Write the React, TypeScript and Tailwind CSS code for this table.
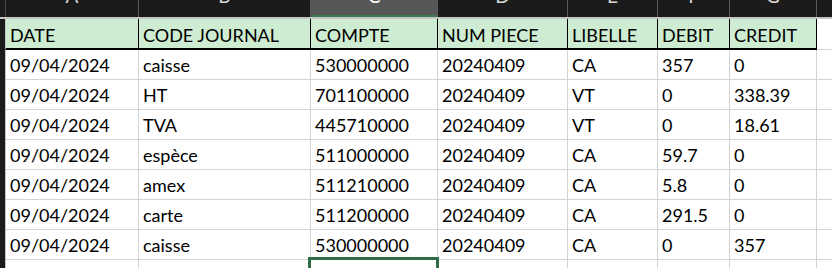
import React from 'react';

const widths = ['w-[133px]', 'w-[172px]', 'w-[127px]', 'w-[130px]', 'w-[90px]', 'w-[72px]', 'w-[87px]'];
const letters = ['A', 'B', 'C', 'D', 'E', 'F', 'G'];
const headers = ['DATE', 'CODE JOURNAL', 'COMPTE', 'NUM PIECE', 'LIBELLE', 'DEBIT', 'CREDIT'];

const rows: string[][] = [
  ['09/04/2024', 'caisse', '530000000', '20240409', 'CA', '357', '0'],
  ['09/04/2024', 'HT', '701100000', '20240409', 'VT', '0', '338.39'],
  ['09/04/2024', 'TVA', '445710000', '20240409', 'VT', '0', '18.61'],
  ['09/04/2024', 'espèce', '511000000', '20240409', 'CA', '59.7', '0'],
  ['09/04/2024', 'amex', '511210000', '20240409', 'CA', '5.8', '0'],
  ['09/04/2024', 'carte', '511200000', '20240409', 'CA', '291.5', '0'],
  ['09/04/2024', 'caisse', '530000000', '20240409', 'CA', '0', '357'],
];

const App: React.FC = () => {
  return (
    <div className="w-[832px] h-[268px] overflow-hidden bg-white text-black text-[18px] font-['Lato','Liberation_Sans',sans-serif]">
      {/* Column letters (cut off at the top edge) */}
      <div className="flex h-[17px] bg-[#1b1b1b] overflow-hidden">
        <div className="w-[6px] shrink-0 border-r border-[#4a4a4a]" />
        {letters.map((l, i) => (
          <div
            key={l}
            className={`${widths[i]} shrink-0 border-r border-[#5a5a5a] flex justify-center ${
              i === 2 ? 'bg-[#575757] border-b-2 border-b-[#3b7a4e] text-white' : 'text-[#d8d8d8]'
            }`}
          >
            <span className="leading-[20px] -mt-[14px] text-[19px]">{l}</span>
          </div>
        ))}
        <div className="flex-1" />
      </div>

      {/* Header row */}
      <div className="flex h-[33px] border-t-2 border-[#c4c4c4]">
        <div className="w-[6px] shrink-0 bg-[#1b1b1b] border-r border-[#c4c4c4] border-b-2 border-b-[#1b1b1b]" />
        {headers.map((h, i) => (
          <div
            key={h}
            className={`${widths[i]} shrink-0 bg-[#cdecd1] border-r border-black border-b-2 border-b-black flex items-end pl-[4px] pb-[3px] whitespace-nowrap`}
          >
            <span className="leading-[20px]">{h}</span>
          </div>
        ))}
        <div className="flex-1 border-b border-[#d4d4d4]" />
      </div>

      {/* Data rows */}
      {rows.map((r, ri) => (
        <div key={ri} className="flex h-[30px]">
          <div className="w-[6px] shrink-0 bg-[#1b1b1b] border-r border-[#c4c4c4]" />
          {r.map((v, ci) => (
            <div
              key={ci}
              className={`${widths[ci]} shrink-0 border-r border-b border-[#d4d4d4] flex items-end pl-[4px] pb-[4px] whitespace-nowrap`}
            >
              <span className="leading-[20px]">{v}</span>
            </div>
          ))}
          <div className="flex-1 border-b border-[#d4d4d4]" />
        </div>
      ))}

      {/* Empty row with selected cell */}
      <div className="flex h-[30px]">
        <div className="w-[6px] shrink-0 bg-[#1b1b1b] border-r border-[#c4c4c4]" />
        {widths.map((w, i) => (
          <div key={i} className={`${w} shrink-0 border-r border-[#d4d4d4] relative`}>
            {i === 2 && (
              <div className="absolute -left-[3px] -right-[2px] -top-[3px] bottom-0 border-[3px] border-[#2f6b45]" />
            )}
          </div>
        ))}
        <div className="flex-1" />
      </div>
    </div>
  );
};

export default App;
